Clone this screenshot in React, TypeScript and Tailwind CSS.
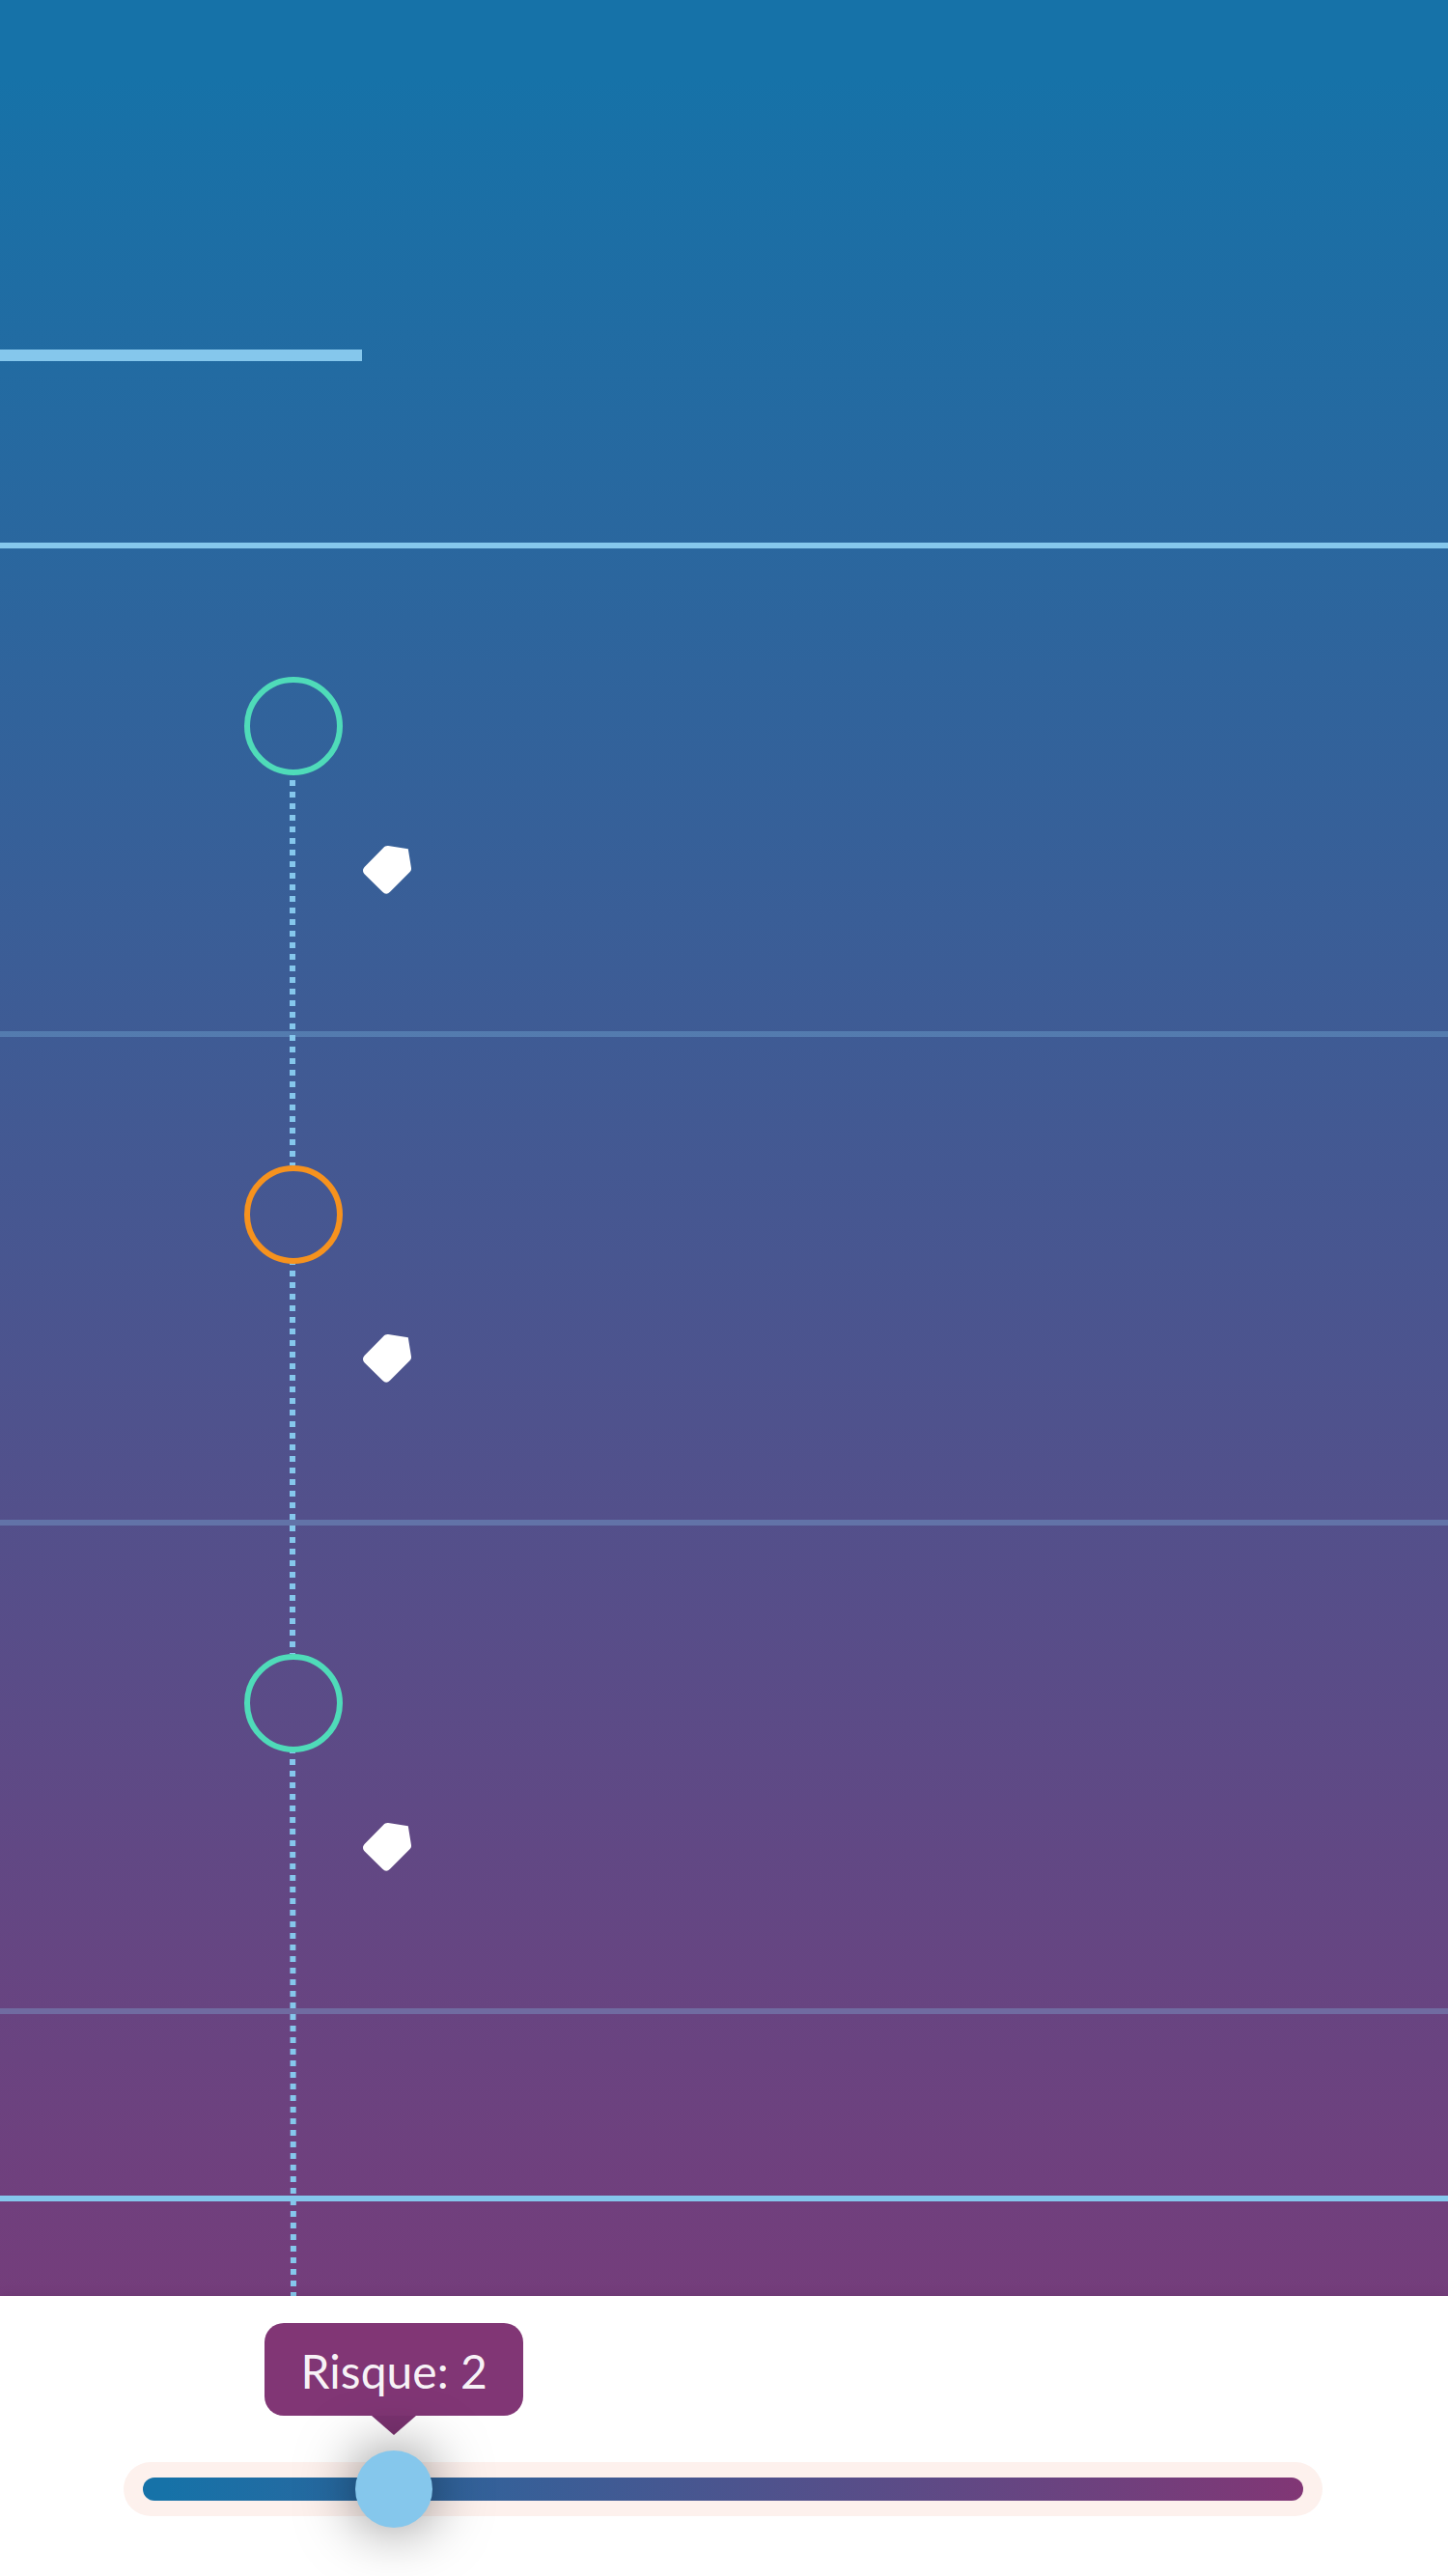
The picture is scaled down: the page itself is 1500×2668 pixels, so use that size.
import { useState } from "react";

type Step = { ring: string; top: string; length: number; drift: number };

const steps: Step[] = [
  { ring: "border-[#4fdbb9]", top: "top-[240px]", length: 399, drift: 0 },
  { ring: "border-[#f6921e]", top: "top-[230px]", length: 409, drift: 0 },
  { ring: "border-[#4fdbb9]", top: "top-[230px]", length: 568, drift: 1 },
];

function Connector({ top, length, drift }: { top: string; length: number; drift: number }) {
  return (
    <svg
      aria-hidden="true"
      width="8"
      height={length}
      className={`absolute left-[300px] ${top}`}
    >
      <line x1="3" y1="0" x2={3 + drift} y2={length} stroke="#85c7ec" strokeWidth="6" strokeDasharray="6 6" />
    </svg>
  );
}

function Marker() {
  return (
    <svg aria-hidden="true" width="50" height="50" viewBox="0 0 50 50" className="mt-[73px] ml-[123px]">
      <path
        d="M21 2.200C22.500 .6 24 -.1 26.200 .1L46.800 3.300L50 23C50.200 25 49.600 26.200 48.200 27.600L28 47.800C25.400 50.400 22.900 50.400 20.300 47.800L2 29.700C-.6 27 -.6 24.400 1.800 21.800Z"
        fill="#fff"
      />
    </svg>
  );
}

function RiskSlider() {
  const [risk, setRisk] = useState(2);
  const ratio = risk / 10;
  return (
    <footer className="relative bg-white pt-[172px] pb-[62px] pl-32 pr-[130px] shadow-[0_0_12px_rgba(0,0,0,0.1)]">
      <div className="relative rounded-full bg-[#fdf1ed] px-5 py-4">
        <div className="h-6 rounded-full bg-linear-to-r/srgb from-[#1672a8] from-2% to-[#813675]" />
        <label
          htmlFor="risk"
          style={{ left: `calc(53px + (100% - 106px) * ${ratio})` }}
          className="absolute bottom-[104px] flex h-24 w-[268px] -translate-x-1/2 items-center justify-center rounded-[20px] bg-[#813675] pt-1 text-5xl text-white/95"
        >
          Risque: {risk}
          <svg aria-hidden="true" width="46" height="20" viewBox="0 0 46 20" className="absolute top-full left-1/2 z-10 -translate-x-1/2">
            <path d="M0 0H46L23 20Z" fill="#7a3270" />
          </svg>
        </label>
        <input
          id="risk"
          type="range"
          min={0}
          max={10}
          value={risk}
          onChange={(e) => setRisk(Number(e.target.value))}
          className="absolute inset-x-[13px] -top-3 h-20 cursor-pointer appearance-none bg-transparent outline-none [&::-webkit-slider-thumb]:size-20 [&::-webkit-slider-thumb]:appearance-none [&::-webkit-slider-thumb]:rounded-full [&::-webkit-slider-thumb]:bg-[#85c7ec] [&::-webkit-slider-thumb]:shadow-[0_0_60px_rgba(0,0,0,0.5)]"
        />
      </div>
    </footer>
  );
}

export default function App() {
  return (
    <div className="min-h-screen overflow-hidden bg-linear-to-b/srgb from-[#1672a8] from-3% to-[#813675] to-[101%] font-['Lato',sans-serif]">
      <header className="border-b-6 border-[#85c7ec] pt-[362px] pb-[188px]">
        <div
          role="progressbar"
          aria-label="Progression"
          aria-valuenow={25}
          aria-valuemin={0}
          aria-valuemax={100}
          className="h-3 w-1/4 bg-[#85c7ec]"
        />
      </header>
      <main>
        <ol>
          {steps.map((step, i) => (
            <li key={i} className="relative border-b-6 border-[#85c7ec]/30 pt-[133px] pb-[142px] pl-[253px]">
              <Connector top={step.top} length={step.length} drift={step.drift} />
              <div className={`relative size-[102px] rounded-full border-6 ${step.ring}`} />
              <Marker />
            </li>
          ))}
        </ol>
        <div className="relative mt-[188px] mb-[98px] h-[6px] bg-[#85c7ec]" />
      </main>
      <RiskSlider />
    </div>
  );
}
